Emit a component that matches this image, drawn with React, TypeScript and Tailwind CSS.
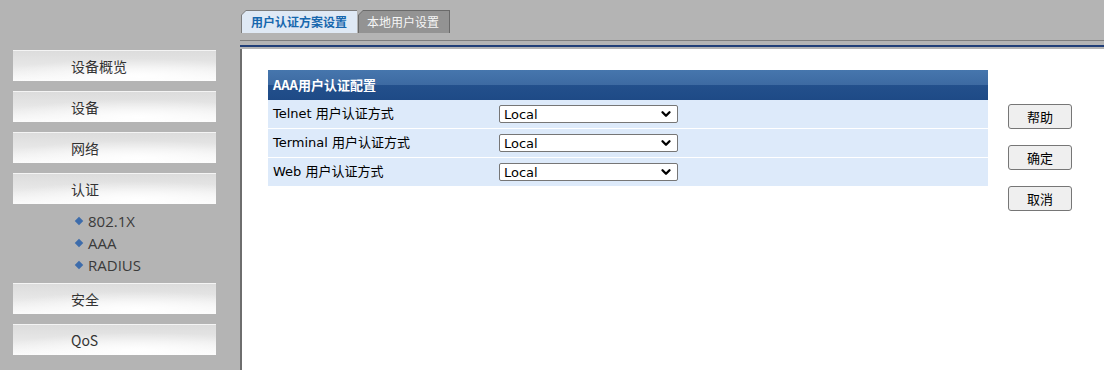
import { ChevronDown } from "lucide-react";

const cjk = "font-['Microsoft_YaHei','Noto_Sans_CJK_SC',sans-serif]";

const menu = ["设备概览", "设备", "网络", "认证"];
const subItems = ["802.1X", "AAA", "RADIUS"];
const menuAfter = ["安全", "QoS"];

const rows = [
	{ label: "Telnet 用户认证方式", value: "Local" },
	{ label: "Terminal 用户认证方式", value: "Local" },
	{ label: "Web 用户认证方式", value: "Local" },
];

function MenuButton({ text, className = "" }: { text: string; className?: string }) {
	return (
		<div
			className={`ml-[13px] flex h-[31px] w-[203px] items-center border-t border-t-[#f4f4f4] bg-[radial-gradient(ellipse_70%_60%_at_62%_85%,#ffffff_0%,rgba(255,255,255,0)_100%),linear-gradient(180deg,#dcdcdc_0%,#e6e6e6_45%,#fbfbfb_100%)] pl-[58px] text-[14px] text-[#333] ${className}`}>
			{text}
		</div>
	);
}

function Sidebar() {
	return (
		<div className={`flex h-[370px] w-[240px] shrink-0 flex-col bg-[#b4b4b4] pt-[50px] ${cjk}`}>
			{menu.map((m, i) => (
				<MenuButton key={m} text={m} className={i > 0 ? "mt-[10px]" : ""} />
			))}
			<div className="pt-[6px] pb-[7px]">
				{subItems.map((s) => (
					<div key={s} className="ml-[76px] flex h-[22px] items-center gap-[6px] text-[15px] text-[#3a3a3a]">
						<span className="block h-[6px] w-[6px] rotate-45 bg-[#3d6cab]" />
						<span className="font-['Open_Sans','Noto_Sans',sans-serif]">{s}</span>
					</div>
				))}
			</div>
			{menuAfter.map((m, i) => (
				<MenuButton key={m} text={m} className={i > 0 ? "mt-[10px]" : ""} />
			))}
		</div>
	);
}

function Tab({ text, active }: { text: string; active?: boolean }) {
	// outer div is the border, inner div is the fill; both have a cut top-left corner
	return (
		<div
			className={`h-[23px] [clip-path:polygon(5px_0,100%_0,100%_100%,0_100%,0_5px)] ${
				active ? "w-[116px] bg-[#7c7c7c] pt-px pl-px" : "w-[92px] bg-[#6a6a6a] pt-px pl-px pr-px"
			}`}>
			<div
				className={`flex h-full items-center [clip-path:polygon(4px_0,100%_0,100%_100%,0_100%,0_4px)] text-[12px] ${
					active
						? "bg-[#dfe9f5] pl-[9px] font-bold text-[#1767ae]"
						: "bg-[#939393] pl-[8px] text-[#f6f6f6]"
				}`}>
				{text}
			</div>
		</div>
	);
}

export default function App() {
	return (
		<div className={`flex h-[370px] w-[1104px] overflow-hidden bg-[#b4b4b4] ${cjk}`}>
			<Sidebar />
			<div className="flex min-w-0 flex-1 flex-col">
				<div className="flex gap-px pt-[10px] pl-px">
					<Tab text="用户认证方案设置" active />
					<Tab text="本地用户设置" />
				</div>
				<div className="mt-[7px] h-px bg-[#7e7e7e]" />
				<div className="mt-[4px] h-[2px] bg-[#213f78]" />
				<div className="h-[2px]" />
				<div className="flex flex-1 gap-[20px] border-l-2 border-[#6e6e6e] bg-white pt-[21px] pl-[26px]">
					<div className="w-[720px]">
						<div className="flex h-[30px] items-center bg-[linear-gradient(180deg,#4676ad_0%,#3d6aa2_50%,#23508c_50%,#1e4a86_100%)] pl-[5px] text-[13px] font-bold text-white">
							AAA用户认证配置
						</div>
						<div className="flex flex-col gap-px bg-white">
							{rows.map((r) => (
								<div key={r.label} className="flex h-[28px] items-center bg-[#ddeafa] pl-[5px]">
									<div className="w-[226px] font-['DejaVu_Sans','Noto_Sans_CJK_SC',sans-serif] text-[13px] text-black">
										{r.label}
									</div>
									<div className="flex h-[18px] w-[179px] items-center justify-between rounded-[2px] border border-[#767676] bg-white pr-[4px] pl-[4px]">
										<span className="font-['DejaVu_Sans',sans-serif] text-[13px] leading-none text-black">
											{r.value}
										</span>
										<ChevronDown size={14} strokeWidth={4} className="text-black" />
									</div>
								</div>
							))}
						</div>
					</div>
					<div className="flex flex-col gap-[16px] pt-[34px]">
						{["帮助", "确定", "取消"].map((b) => (
							<button
								key={b}
								className="flex h-[25px] w-[64px] items-center justify-center rounded-[3px] border border-[#767676] bg-[#efefef] text-[13px] text-black">
								{b}
							</button>
						))}
					</div>
				</div>
			</div>
		</div>
	);
}
